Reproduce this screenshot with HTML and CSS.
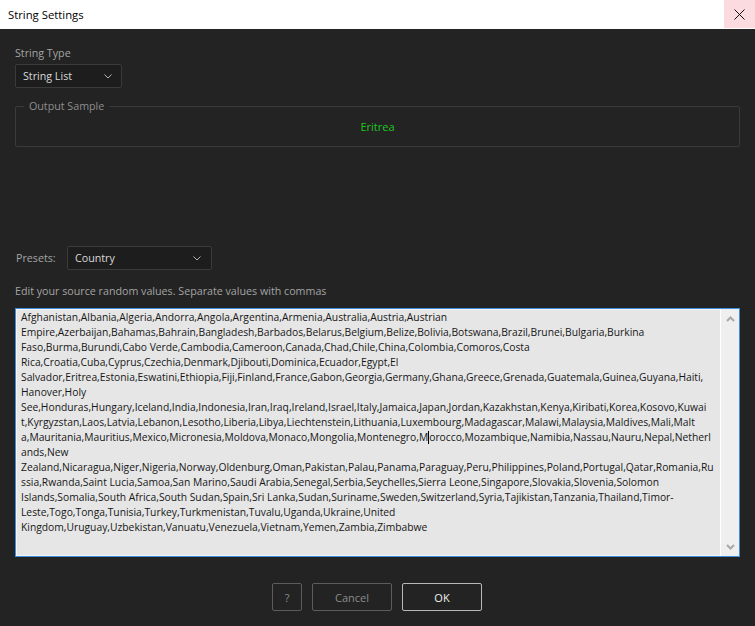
FILE: index.html
```html
<!DOCTYPE html>
<html lang="en">
<head>
    <meta charset="UTF-8">
    <title>String Settings</title>
    <link rel="stylesheet" href="styles.css">
</head>
<body>
    <div class="window">
        <div class="titlebar">
            <span class="title">String Settings</span>
            <div class="close-btn">
                <svg width="11" height="11" viewBox="0 0 11 11"><path d="M0.5 0.5L10.5 10.5M10.5 0.5L0.5 10.5" stroke="#111" stroke-width="1" fill="none"/></svg>
            </div>
        </div>
        <div class="content">
            <div class="field-label">String Type</div>
            <div class="dropdown type-select">
                <span>String List</span>
                <svg class="chevron" width="8" height="5" viewBox="0 0 8 5"><path d="M0.5 0.5L4 4L7.5 0.5" stroke="#b4b4b4" fill="none"/></svg>
            </div>

            <div class="output-sample">
                <span class="legend">Output Sample</span>
                <div class="sample-value">Eritrea</div>
            </div>

            <div class="presets-row">
                <span class="presets-label">Presets:</span>
                <div class="dropdown presets-select">
                    <span>Country</span>
                    <svg class="chevron" width="8" height="5" viewBox="0 0 8 5"><path d="M0.5 0.5L4 4L7.5 0.5" stroke="#b4b4b4" fill="none"/></svg>
                </div>
            </div>

            <div class="hint">Edit your source random values. Separate values with commas</div>

            <div class="source-box">
                <div class="source-text">
                    <div class="line">Afghanistan,Albania,Algeria,Andorra,Angola,Argentina,Armenia,Australia,Austria,Austrian</div>
                    <div class="line">Empire,Azerbaijan,Bahamas,Bahrain,Bangladesh,Barbados,Belarus,Belgium,Belize,Bolivia,Botswana,Brazil,Brunei,Bulgaria,Burkina</div>
                    <div class="line">Faso,Burma,Burundi,Cabo Verde,Cambodia,Cameroon,Canada,Chad,Chile,China,Colombia,Comoros,Costa</div>
                    <div class="line">Rica,Croatia,Cuba,Cyprus,Czechia,Denmark,Djibouti,Dominica,Ecuador,Egypt,El</div>
                    <div class="line">Salvador,Eritrea,Estonia,Eswatini,Ethiopia,Fiji,Finland,France,Gabon,Georgia,Germany,Ghana,Greece,Grenada,Guatemala,Guinea,Guyana,Haiti,</div>
                    <div class="line">Hanover,Holy</div>
                    <div class="line">See,Honduras,Hungary,Iceland,India,Indonesia,Iran,Iraq,Ireland,Israel,Italy,Jamaica,Japan,Jordan,Kazakhstan,Kenya,Kiribati,Korea,Kosovo,Kuwai</div>
                    <div class="line">t,Kyrgyzstan,Laos,Latvia,Lebanon,Lesotho,Liberia,Libya,Liechtenstein,Lithuania,Luxembourg,Madagascar,Malawi,Malaysia,Maldives,Mali,Malt</div>
                    <div class="line">a,Mauritania,Mauritius,Mexico,Micronesia,Moldova,Monaco,Mongolia,Montenegro,M<span class="caret"></span>orocco,Mozambique,Namibia,Nassau,Nauru,Nepal,Netherl</div>
                    <div class="line">ands,New</div>
                    <div class="line">Zealand,Nicaragua,Niger,Nigeria,Norway,Oldenburg,Oman,Pakistan,Palau,Panama,Paraguay,Peru,Philippines,Poland,Portugal,Qatar,Romania,Ru</div>
                    <div class="line">ssia,Rwanda,Saint Lucia,Samoa,San Marino,Saudi Arabia,Senegal,Serbia,Seychelles,Sierra Leone,Singapore,Slovakia,Slovenia,Solomon</div>
                    <div class="line">Islands,Somalia,South Africa,South Sudan,Spain,Sri Lanka,Sudan,Suriname,Sweden,Switzerland,Syria,Tajikistan,Tanzania,Thailand,Timor-</div>
                    <div class="line">Leste,Togo,Tonga,Tunisia,Turkey,Turkmenistan,Tuvalu,Uganda,Ukraine,United</div>
                    <div class="line">Kingdom,Uruguay,Uzbekistan,Vanuatu,Venezuela,Vietnam,Yemen,Zambia,Zimbabwe</div>
                </div>
                <div class="scrollbar">
                    <svg width="9" height="6" viewBox="0 0 9 6"><path d="M1 5L4.5 1.5L8 5" stroke="#a8a8a8" stroke-width="2" fill="none"/></svg>
                    <svg width="9" height="6" viewBox="0 0 9 6"><path d="M1 1L4.5 4.5L8 1" stroke="#a8a8a8" stroke-width="2" fill="none"/></svg>
                </div>
            </div>

            <div class="buttons">
                <button class="btn btn-help">?</button>
                <button class="btn btn-cancel">Cancel</button>
                <button class="btn btn-ok">OK</button>
            </div>
        </div>
    </div>
</body>
</html>
```

FILE: styles.css
```css
body {
    margin: 0;
    font-family: 'Open Sans', 'Noto Sans', sans-serif;
    font-size: 10.7px;
    background-color: #232323;
}

.window {
    width: 755px;
    height: 626px;
    display: flex;
    flex-direction: column;
}

.titlebar {
    height: 29px;
    background-color: #fff;
    display: flex;
    align-items: flex-start;
    justify-content: space-between;
}

.title {
    padding-left: 8px;
    line-height: 29px;
    font-size: 11.3px;
    color: #000;
}

.close-btn {
    width: 31px;
    height: 28px;
    background-color: #fcdbe0;
    display: flex;
    align-items: center;
    justify-content: center;
}

.content {
    flex: 1;
    padding: 16px 15px 0 15px;
    display: flex;
    flex-direction: column;
}

.field-label,
.presets-label,
.hint {
    color: #a3a3a3;
    line-height: 16px;
}

.dropdown {
    box-sizing: border-box;
    height: 24px;
    background-color: #1d1d1d;
    border: 1px solid #3a3a3a;
    border-radius: 2px;
    display: flex;
    align-items: center;
    justify-content: space-between;
    padding: 0 9px 0 7px;
    color: #d8d8d8;
}

.type-select {
    margin-top: 3px;
    width: 107px;
}

.presets-select {
    width: 145px;
    padding-right: 10px;
}

.output-sample {
    position: relative;
    margin-top: 18px;
    height: 41px;
    box-sizing: border-box;
    border: 1px solid #3a3a3a;
    border-radius: 2px;
}

.output-sample .legend {
    position: absolute;
    top: -9px;
    left: 8px;
    padding: 0 5px;
    background-color: #232323;
    color: #8e8e8e;
    line-height: 16px;
}

.sample-value {
    text-align: center;
    line-height: 39px;
    font-size: 11px;
    color: #22c622;
}

.presets-row {
    margin-top: 99px;
    display: flex;
    align-items: center;
}

.presets-label {
    width: 52px;
    padding-left: 1px;
    box-sizing: border-box;
}

.hint {
    margin-top: 13px;
}

.source-box {
    margin-top: 9px;
    height: 249px;
    box-sizing: border-box;
    border: 1px solid #3b8de0;
    background-color: #e6e6e6;
    box-shadow: inset 0 0 0 1px #f4f4f4;
    display: flex;
}

.source-text {
    flex: 1;
    padding: 1px 0 0 5px;
    font-size: 10.3px;
    line-height: 15px;
    color: #161616;
    white-space: nowrap;
    overflow: hidden;
}

.caret {
    display: inline-block;
    width: 0;
    height: 13px;
    border-left: 1px solid #000;
    vertical-align: -3px;
}

.scrollbar {
    width: 18px;
    border-left: 1px solid #fff;
    background-color: #efefef;
    display: flex;
    flex-direction: column;
    justify-content: space-between;
    align-items: center;
    padding: 7px 0 6px 0;
}

.buttons {
    margin-top: 26px;
    padding-right: 1px;
    display: flex;
    justify-content: center;
    gap: 10px;
}

.btn {
    height: 28px;
    background-color: #232323;
    border: 1px solid #5c5c5c;
    border-radius: 2px;
    font-family: inherit;
    font-size: 11px;
    color: #8c8c8c;
    padding: 0;
}

.btn-help {
    width: 30px;
}

.btn-cancel {
    width: 80px;
}

.btn-ok {
    width: 80px;
    border-color: #b8b8b8;
    color: #f0f0f0;
}
```
